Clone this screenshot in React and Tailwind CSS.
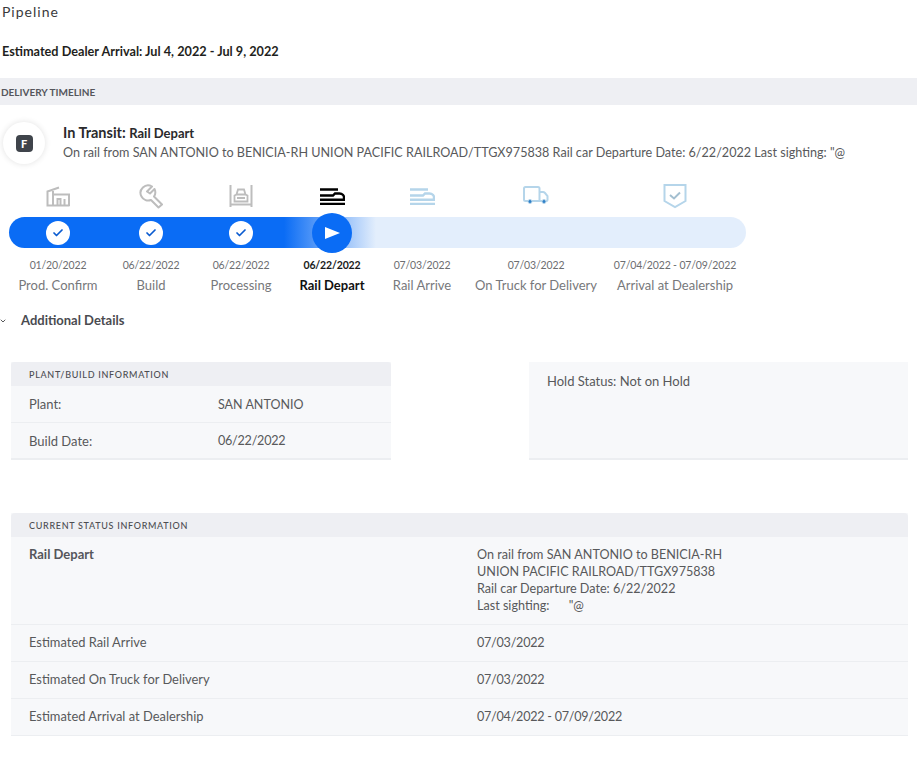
import { Check, ChevronDown } from "lucide-react";

const FONT = "font-['Lato','Noto_Sans',sans-serif]";

function FactoryIcon() {
  return (
    <svg width="24" height="21" viewBox="0 0 24 21" fill="none" stroke="#bdbdbd" strokeWidth="2">
      <path d="M1.500 20V5.500L13 1.500M7 5v15M7 8.500h16V20M0.500 19.500h23M11.500 19V13h3v6M18.500 19v-6" />
    </svg>
  );
}

function WrenchIcon() {
  return (
    <svg width="25" height="25" viewBox="0 0 25 25" fill="none" stroke="#bdbdbd" strokeWidth="2" strokeLinejoin="round">
      <path d="M13 2.500A7.500 7.500 0 0 0 2.500 12.500 7.500 7.500 0 0 0 12 16l7.500 7.500 3.500-3-8-8a7.500 7.500 0 0 0 .5-7.500L11 9.500 8 7.500Z" />
    </svg>
  );
}

function CarrierIcon() {
  return (
    <svg width="24" height="22" viewBox="0 0 24 22" fill="none" stroke="#bdbdbd" strokeWidth="2">
      <path d="M1.500 0v22M22.500 0v22M1 19.500h22" />
      <path d="M5.500 16.500V10.500l2-1 1.500-5h6l1.500 5 2 1v6ZM7.500 9.500h9M8 13h8" strokeWidth="1.800" />
    </svg>
  );
}

function RailIcon({ color }) {
  return (
    <svg width="25" height="17" viewBox="0 0 25 17" fill="none" stroke={color} strokeWidth="2.400">
      <path d="M0 1.500h18M0 7.500h13l2-2h4.500c3 0 4.500 2 4.500 4v2.300H0M0 16h25" />
    </svg>
  );
}

function TruckIcon() {
  return (
    <svg width="26" height="20" viewBox="0 0 26 20" fill="none">
      <path d="M5 15H2.500A1.500 1.500 0 0 1 1 13.500V2.500A1.500 1.500 0 0 1 2.500 1H15c.8 0 1.500.7 1.500 1.500V15H9M16.500 6H20c1 0 1.500.5 2 1l2.500 3v4c0 .6-.4 1-1 1H23M19 15h-2.500" stroke="#b5d5ea" strokeWidth="2" />
      <circle cx="7" cy="15.500" r="2" fill="#2f80c8" stroke="#b5d5ea" />
      <circle cx="21" cy="15.500" r="2" fill="#2f80c8" stroke="#b5d5ea" />
    </svg>
  );
}

function ShieldIcon() {
  return (
    <svg width="24" height="26" viewBox="0 0 24 26" fill="none" stroke="#b5d5ea" strokeWidth="2">
      <path d="M1.500 2h21v16L12 24 1.500 18V2Z" />
      <path d="m7 12 4 3.500 6-6" stroke="#a3bfd0" />
    </svg>
  );
}

const steps = [
  { w: "w-[92px]", icon: <FactoryIcon />, date: "01/20/2022", label: "Prod. Confirm", state: "done" },
  { w: "w-[94px]", icon: <WrenchIcon />, date: "06/22/2022", label: "Build", state: "done" },
  { w: "w-[86px]", icon: <CarrierIcon />, date: "06/22/2022", label: "Processing", state: "done" },
  { w: "w-[96px]", icon: <RailIcon color="#000000" />, date: "06/22/2022", label: "Rail Depart", state: "current" },
  { w: "w-[84px]", icon: <RailIcon color="#b5d5ea" />, date: "07/03/2022", label: "Rail Arrive", state: "next" },
  { w: "w-[144px]", icon: <TruckIcon />, date: "07/03/2022", label: "On Truck for Delivery", state: "next" },
  { w: "w-[134px]", icon: <ShieldIcon />, date: "07/04/2022 - 07/09/2022", label: "Arrival at Dealership", state: "next" },
];

const statusRows = [
  ["Estimated Rail Arrive", "07/03/2022"],
  ["Estimated On Truck for Delivery", "07/03/2022"],
  ["Estimated Arrival at Dealership", "07/04/2022 - 07/09/2022"],
];

export default function App() {
  return (
    <div className={`${FONT} w-[917px] h-[760px] bg-white text-[#58595b] overflow-hidden`}>
      <p className="pl-[2px] pt-[3px] h-[24px] text-[14px] leading-[18px] tracking-[1px] text-[#3a3a3c]">Pipeline</p>
      <p className="pl-[2px] mt-[17px] h-[20px] text-[12.700px] leading-[20px] font-bold text-[#1f1f21]">
        Estimated Dealer Arrival: Jul 4, 2022 - Jul 9, 2022
      </p>
      <div className="mt-[17px] h-[27px] bg-[#eeeff3] pl-[1px] text-[10px] leading-[29px] font-bold text-[#55565c]">
        DELIVERY TIMELINE
      </div>

      <div className="flex h-[57px] pl-[3px] pt-[17px]">
        <div className="w-[42px] h-[42px] rounded-full bg-white shadow-[0_0_6px_rgba(0,0,0,0.12)] flex items-center justify-center">
          <div className="w-[17px] h-[17px] rounded-[4px] bg-[#3f444b] text-white text-[11px] leading-[17px] font-black text-center">F</div>
        </div>
        <div className="ml-[18px] mt-[1px]">
          <p className="text-[14.500px] leading-[20px] font-bold text-[#2a2a2c]">
            In Transit: <span className="text-[13px]">Rail Depart</span>
          </p>
          <p className="text-[12.600px] leading-[20px] whitespace-nowrap">
            On rail from SAN ANTONIO to BENICIA-RH UNION PACIFIC RAILROAD/TTGX975838 Rail car Departure Date: 6/22/2022 Last sighting: "@
          </p>
        </div>
      </div>

      <div className="mt-[21px] pl-[12px] flex h-[26px]">
        {steps.map((s) => (
          <div key={s.label} className={`${s.w} flex items-center justify-center`}>{s.icon}</div>
        ))}
      </div>

      <div className="mt-[8px] ml-[9px] w-[737px] h-[31px] rounded-full bg-[linear-gradient(90deg,#0a6cf5_0,#0a6cf5_275px,#e3eefc_367px)] flex pl-[3px]">
        {steps.map((s) => (
          <div key={s.label} className={`${s.w} flex items-center justify-center`}>
            {s.state === "done" && (
              <div className="w-[24px] h-[24px] rounded-full bg-white flex items-center justify-center">
                <Check size={12} strokeWidth={3.5} color="#0a5bd0" />
              </div>
            )}
            {s.state === "current" && (
              <div className="w-[40px] h-[40px] shrink-0 rounded-full bg-[#0a6cf5] flex items-center justify-center">
                <svg width="15" height="12" viewBox="0 0 15 12" className="ml-[1px]">
                  <polygon points="0,0 15,6 0,12" fill="#ffffff" />
                </svg>
              </div>
            )}
          </div>
        ))}
      </div>

      <div className="mt-[9px] pl-[12px] flex">
        {steps.map((s) => {
          const current = s.state === "current";
          return (
            <div key={s.label} className={`${s.w} flex flex-col items-center whitespace-nowrap`}>
              <p className={`text-[10.500px] tracking-[-0.15px] leading-[16px] ${current ? "font-bold text-[#1a1a1a]" : "text-[#6d6e71]"}`}>{s.date}</p>
              <p className={`mt-[3px] text-[13px] leading-[18px] ${current ? "font-bold text-[#111111]" : "text-[#77787b]"}`}>{s.label}</p>
            </div>
          );
        })}
      </div>

      <div className="mt-[17px] flex items-center h-[20px]">
        <ChevronDown size={8} strokeWidth={3} className="ml-[-1px] text-[#58595b]" />
        <span className="ml-[14px] text-[13px] font-bold text-[#4a4b50]">Additional Details</span>
      </div>

      <div className="mt-[31px] ml-[11px] w-[897px] flex justify-between items-stretch">
        <div className="w-[380px] h-[98px] bg-[#f7f8fa] border-b-2 border-[#eceef1]">
          <div className="h-[24px] pl-[18px] bg-[#eeeff3] rounded-t-[3px] text-[9px] leading-[25px] tracking-[0.7px] font-medium text-[#4c4d52]">PLANT/BUILD INFORMATION</div>
          <div className="h-[37px] pt-[2px] flex items-center border-b border-[#eceef1] text-[12.500px]">
            <span className="pl-[18px] w-[207px] text-[13px]">Plant:</span>
            <span>SAN ANTONIO</span>
          </div>
          <div className="h-[35px] pt-[2px] flex items-center text-[12.500px]">
            <span className="pl-[18px] w-[207px] text-[13px]">Build Date:</span>
            <span className="text-[12.600px] tracking-[-0.25px]">06/22/2022</span>
          </div>
        </div>
        <div className="w-[379px] h-[98px] bg-[#f7f8fa] border-b-2 border-[#eceef1] pl-[18px] pt-[9px] text-[13px] leading-[20px]">
          Hold Status: Not on Hold
        </div>
      </div>

      <div className="mt-[53px] ml-[11px] w-[897px] bg-[#f7f8fa] text-[12.600px]">
        <div className="h-[24px] pl-[18px] bg-[#eeeff3] rounded-t-[4px] text-[9px] leading-[25px] tracking-[0.7px] font-medium text-[#4c4d52]">CURRENT STATUS INFORMATION</div>
        <div className="h-[88px] flex pt-[9px] border-b border-[#eceef1] leading-[17px]">
          <span className="pl-[18px] w-[466px] font-bold text-[#55565c] text-[13px]">Rail Depart</span>
          <div>
            <p>On rail from SAN ANTONIO to BENICIA-RH</p>
            <p>UNION PACIFIC RAILROAD/TTGX975838</p>
            <p>Rail car Departure Date: 6/22/2022</p>
            <p className="whitespace-pre">{'Last sighting:      "@'}</p>
          </div>
        </div>
        {statusRows.map(([label, value]) => (
          <div key={label} className="h-[37px] flex items-center border-b border-[#eceef1]">
            <span className="pl-[18px] w-[466px] text-[12.900px]">{label}</span>
            <span className="text-[12.600px] tracking-[-0.25px]">{value}</span>
          </div>
        ))}
      </div>
    </div>
  );
}
